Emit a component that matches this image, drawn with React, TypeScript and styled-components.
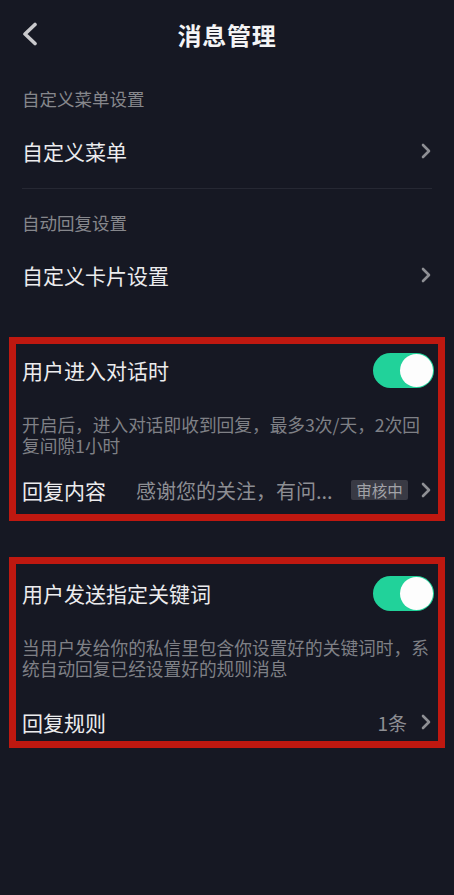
import React from "react";
import styled, { createGlobalStyle } from "styled-components";

const GlobalStyle = createGlobalStyle`
    html, body {
        margin: 0;
        padding: 0;
        background: #161823;
    }
    body {
        font-family: "Noto Sans CJK SC", "Noto Sans", sans-serif;
    }
`;

const Page = styled.div`
    width: 454px;
    min-height: 895px;
    background: #161823;
    color: #ececee;
`;

const Header = styled.div`
    display: grid;
    grid-template-columns: 60px 1fr 60px;
    align-items: center;
    height: 68px;
`;

const Back = styled.div`
    display: flex;
    align-items: center;
    padding-left: 22px;
    height: 100%;
`;

const Title = styled.h1`
    margin: 0;
    text-align: center;
    font-size: 24px;
    font-weight: 700;
    color: #f4f4f5;
    letter-spacing: 0.8px;
`;

const Section = styled.div`
    padding: 0 22px;
`;

const SectionLabel = styled.div<{ $top: number }>`
    padding-top: ${(p) => p.$top}px;
    height: 30px;
    line-height: 30px;
    font-size: 17.5px;
    color: #86878c;
`;

const MenuRow = styled.div`
    display: flex;
    align-items: center;
    justify-content: space-between;
    height: 74px;
    font-size: 21px;
    color: #ececee;
    padding-right: 1px;
`;

const Divider = styled.div`
    height: 1px;
    background: #262833;
`;

const Card = styled.div<{ $top: number; $mt: number }>`
    margin: ${(p) => p.$mt}px 9px 0 9px;
    border: 7.5px solid #bf1810;
    padding: ${(p) => p.$top}px 3px 0 6px;
`;

const HeadRow = styled.div`
    display: flex;
    align-items: center;
    justify-content: space-between;
    height: 52px;
    font-size: 21px;
    color: #ececee;
`;

const Toggle = styled.div<{ $on: boolean }>`
    position: relative;
    width: 61px;
    height: 35px;
    border-radius: 18px;
    background: ${(p) => (p.$on ? "#21d29a" : "#3a3b44")};
    margin-right: 1px;

    &::after {
        content: "";
        position: absolute;
        top: 1px;
        right: ${(p) => (p.$on ? "1px" : "27px")};
        width: 33px;
        height: 33px;
        border-radius: 50%;
        background: #fdfdfd;
    }
`;

const Desc = styled.p`
    margin: 18px 0 0 0;
    font-size: 17.7px;
    line-height: 21px;
    color: #7f8086;
    padding-right: 4px;
`;

const Foot = styled.div<{ $mt: number; $h: number }>`
    display: flex;
    align-items: center;
    margin-top: ${(p) => p.$mt}px;
    height: ${(p) => p.$h}px;
    padding-right: 4px;
`;

const FootLabel = styled.span`
    flex: none;
    font-size: 21px;
    color: #ececee;
`;

const FootValue = styled.span`
    flex: 1;
    margin-left: 30px;
    font-size: 20px;
    color: #8d8e93;
    white-space: nowrap;
    overflow: hidden;
`;

const Count = styled.span`
    flex: 1;
    text-align: right;
    font-size: 19px;
    color: #8d8e93;
    margin-right: 14px;
`;

const Badge = styled.span`
    flex: none;
    display: inline-flex;
    align-items: center;
    justify-content: center;
    width: 57px;
    height: 20px;
    border-radius: 2px;
    background: #393a44;
    color: #a2a3a8;
    font-size: 15.5px;
    margin: 0 13px 0 16px;
`;

const Chevron = () => (
    <svg width="10" height="16" viewBox="0 0 10 16">
        <polyline
            points="2,2 8,8 2,14"
            fill="none"
            stroke="#8e8f94"
            strokeWidth="2.6"
            strokeLinecap="round"
            strokeLinejoin="round"
        />
    </svg>
);

const BackIcon = () => (
    <svg width="16" height="24" viewBox="0 0 16 24">
        <polyline
            points="13,2.5 3,12 13,21.5"
            fill="none"
            stroke="#c9c9cc"
            strokeWidth="3.6"
            strokeLinecap="round"
            strokeLinejoin="round"
        />
    </svg>
);

const App = () => {
    return (
        <Page>
            <GlobalStyle />
            <Header>
                <Back>
                    <BackIcon />
                </Back>
                <Title>消息管理</Title>
                <div />
            </Header>

            <Section>
                <SectionLabel $top={16}>自定义菜单设置</SectionLabel>
                <MenuRow>
                    <span>自定义菜单</span>
                    <Chevron />
                </MenuRow>
                <Divider />
                <SectionLabel $top={19}>自动回复设置</SectionLabel>
                <MenuRow>
                    <span>自定义卡片设置</span>
                    <Chevron />
                </MenuRow>
            </Section>

            <Card $top={0} $mt={25}>
                <HeadRow>
                    <span>用户进入对话时</span>
                    <Toggle $on />
                </HeadRow>
                <Desc>开启后，进入对话即收到回复，最多3次/天，2次回复间隙1小时</Desc>
                <Foot $mt={10} $h={48}>
                    <FootLabel>回复内容</FootLabel>
                    <FootValue>感谢您的关注，有问...</FootValue>
                    <Badge>审核中</Badge>
                    <Chevron />
                </Foot>
            </Card>

            <Card $top={3} $mt={36}>
                <HeadRow>
                    <span>用户发送指定关键词</span>
                    <Toggle $on />
                </HeadRow>
                <Desc>当用户发给你的私信里包含你设置好的关键词时，系统自动回复已经设置好的规则消息</Desc>
                <Foot $mt={24} $h={38}>
                    <FootLabel>回复规则</FootLabel>
                    <Count>1条</Count>
                    <Chevron />
                </Foot>
            </Card>
        </Page>
    );
};

export default App;
